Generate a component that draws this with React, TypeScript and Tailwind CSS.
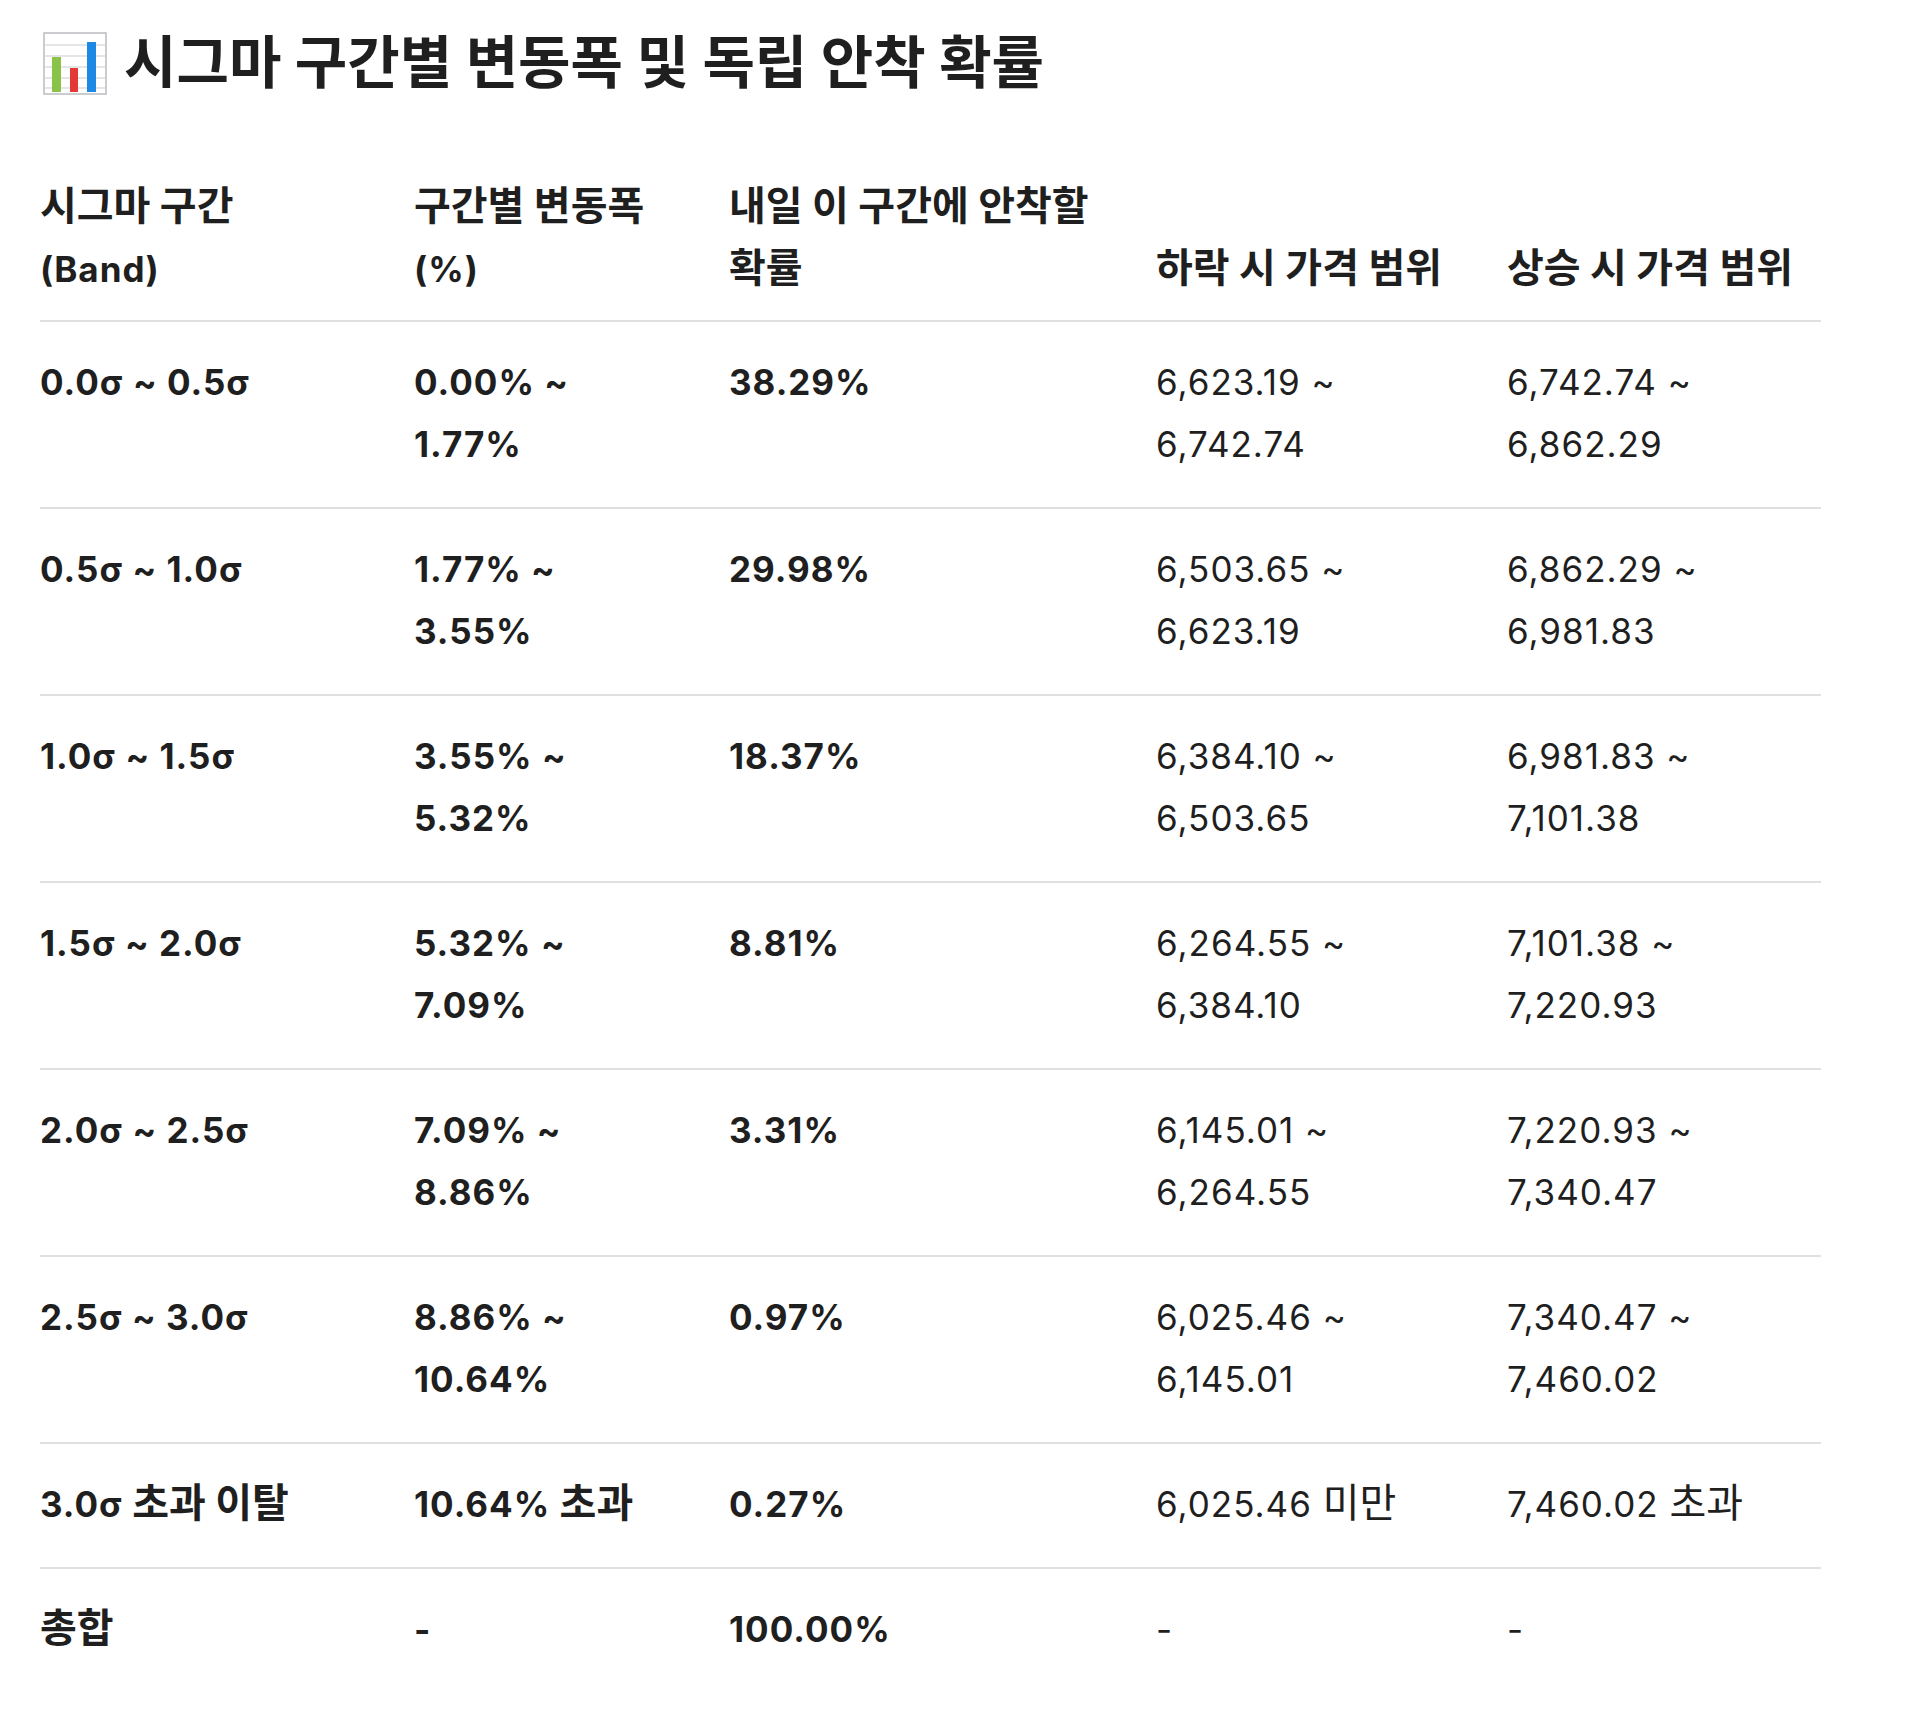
const rows = [
  { band: '0.0σ ~ 0.5σ', range: ['0.00% ~', '1.77%'], prob: '38.29%', down: ['6,623.19 ~', '6,742.74'], up: ['6,742.74 ~', '6,862.29'] },
  { band: '0.5σ ~ 1.0σ', range: ['1.77% ~', '3.55%'], prob: '29.98%', down: ['6,503.65 ~', '6,623.19'], up: ['6,862.29 ~', '6,981.83'] },
  { band: '1.0σ ~ 1.5σ', range: ['3.55% ~', '5.32%'], prob: '18.37%', down: ['6,384.10 ~', '6,503.65'], up: ['6,981.83 ~', '7,101.38'] },
  { band: '1.5σ ~ 2.0σ', range: ['5.32% ~', '7.09%'], prob: '8.81%', down: ['6,264.55 ~', '6,384.10'], up: ['7,101.38 ~', '7,220.93'] },
  { band: '2.0σ ~ 2.5σ', range: ['7.09% ~', '8.86%'], prob: '3.31%', down: ['6,145.01 ~', '6,264.55'], up: ['7,220.93 ~', '7,340.47'] },
  { band: '2.5σ ~ 3.0σ', range: ['8.86% ~', '10.64%'], prob: '0.97%', down: ['6,025.46 ~', '6,145.01'], up: ['7,340.47 ~', '7,460.02'] },
  { band: '3.0σ 초과 이탈', range: ['10.64% 초과'], prob: '0.27%', down: ['6,025.46 미만'], up: ['7,460.02 초과'] },
  { band: '총합', range: ['-'], prob: '100.00%', down: ['-'], up: ['-'] },
];

const ChartEmoji = () => (
  <svg width="64" height="63" viewBox="0 0 64 63" className="inline-block align-middle ml-[3px] mr-[17px]">
    <rect x="1" y="1" width="62" height="61" fill="#fff" stroke="#b9bcc0" strokeWidth="1.5" />
    {[13, 24, 35, 46, 56].map((y) => (
      <line key={y} x1="1" x2="63" y1={y} y2={y} stroke="#c9ccd0" strokeWidth="1.2" />
    ))}
    <rect x="9" y="25" width="9" height="35" fill="#8bc34a" />
    <rect x="27" y="36" width="8" height="24" fill="#e53935" />
    <rect x="44" y="10" width="9" height="50" fill="#1e88e5" />
  </svg>
);

// hangul runs are set a bit larger so they match the reference's fallback font
const Txt = ({ text }: { text: string }) => (
  <>
    {text.split(/([가-힣]+(?: [가-힣]+)*)/).map((part, i) =>
      /[가-힣]/.test(part) ? (
        <span key={i} className="text-[40px] leading-none tracking-normal">{part}</span>
      ) : (
        <span key={i}>{part}</span>
      )
    )}
  </>
);

const Lines = ({ items }: { items: string[] }) => (
  <>
    {items.map((t, i) => (
      <div key={i}><Txt text={t} /></div>
    ))}
  </>
);

export default function App() {
  return (
    <div
      className="min-h-[1718px] bg-white pl-[40px] text-[#1f1f1f]"
      style={{ fontFamily: 'Inter, "Noto Sans CJK KR", sans-serif' }}
    >
      <h2 className="pt-[28px] text-[57px] leading-[70px] font-bold flex items-center">
        <ChartEmoji />
        <span>시그마 구간별 변동폭 및 독립 안착 확률</span>
      </h2>

      <table className="mt-[78px] w-[1781px] table-fixed border-collapse text-[35px] leading-[62px] tracking-[1px]">
        <colgroup>
          <col className="w-[374px]" />
          <col className="w-[315px]" />
          <col className="w-[427px]" />
          <col className="w-[351px]" />
          <col className="w-[314px]" />
        </colgroup>
        <thead>
          <tr className="border-b-2 border-[#e0e0e0] text-left align-bottom">
            <th className="pb-[20px] font-bold"><Txt text="시그마 구간" /><br />(Band)</th>
            <th className="pb-[20px] font-bold"><Txt text="구간별 변동폭" /><br />(%)</th>
            <th className="pb-[20px] font-bold"><Txt text="내일 이 구간에 안착할" /><br /><Txt text="확률" /></th>
            <th className="pb-[20px] font-bold"><Txt text="하락 시 가격 범위" /></th>
            <th className="pb-[20px] font-bold"><Txt text="상승 시 가격 범위" /></th>
          </tr>
        </thead>
        <tbody>
          {rows.map((r, i) => (
            <tr key={r.band} className={i < rows.length - 1 ? 'align-top border-b-2 border-[#e0e0e0]' : 'align-top'}>
              <td className="pt-[29px] pb-[32px] font-bold"><Txt text={r.band} /></td>
              <td className="pt-[29px] pb-[32px] font-bold"><Lines items={r.range} /></td>
              <td className="pt-[29px] pb-[32px] font-bold">{r.prob}</td>
              <td className="pt-[29px] pb-[32px]"><Lines items={r.down} /></td>
              <td className="pt-[29px] pb-[32px]"><Lines items={r.up} /></td>
            </tr>
          ))}
        </tbody>
      </table>
    </div>
  );
}
